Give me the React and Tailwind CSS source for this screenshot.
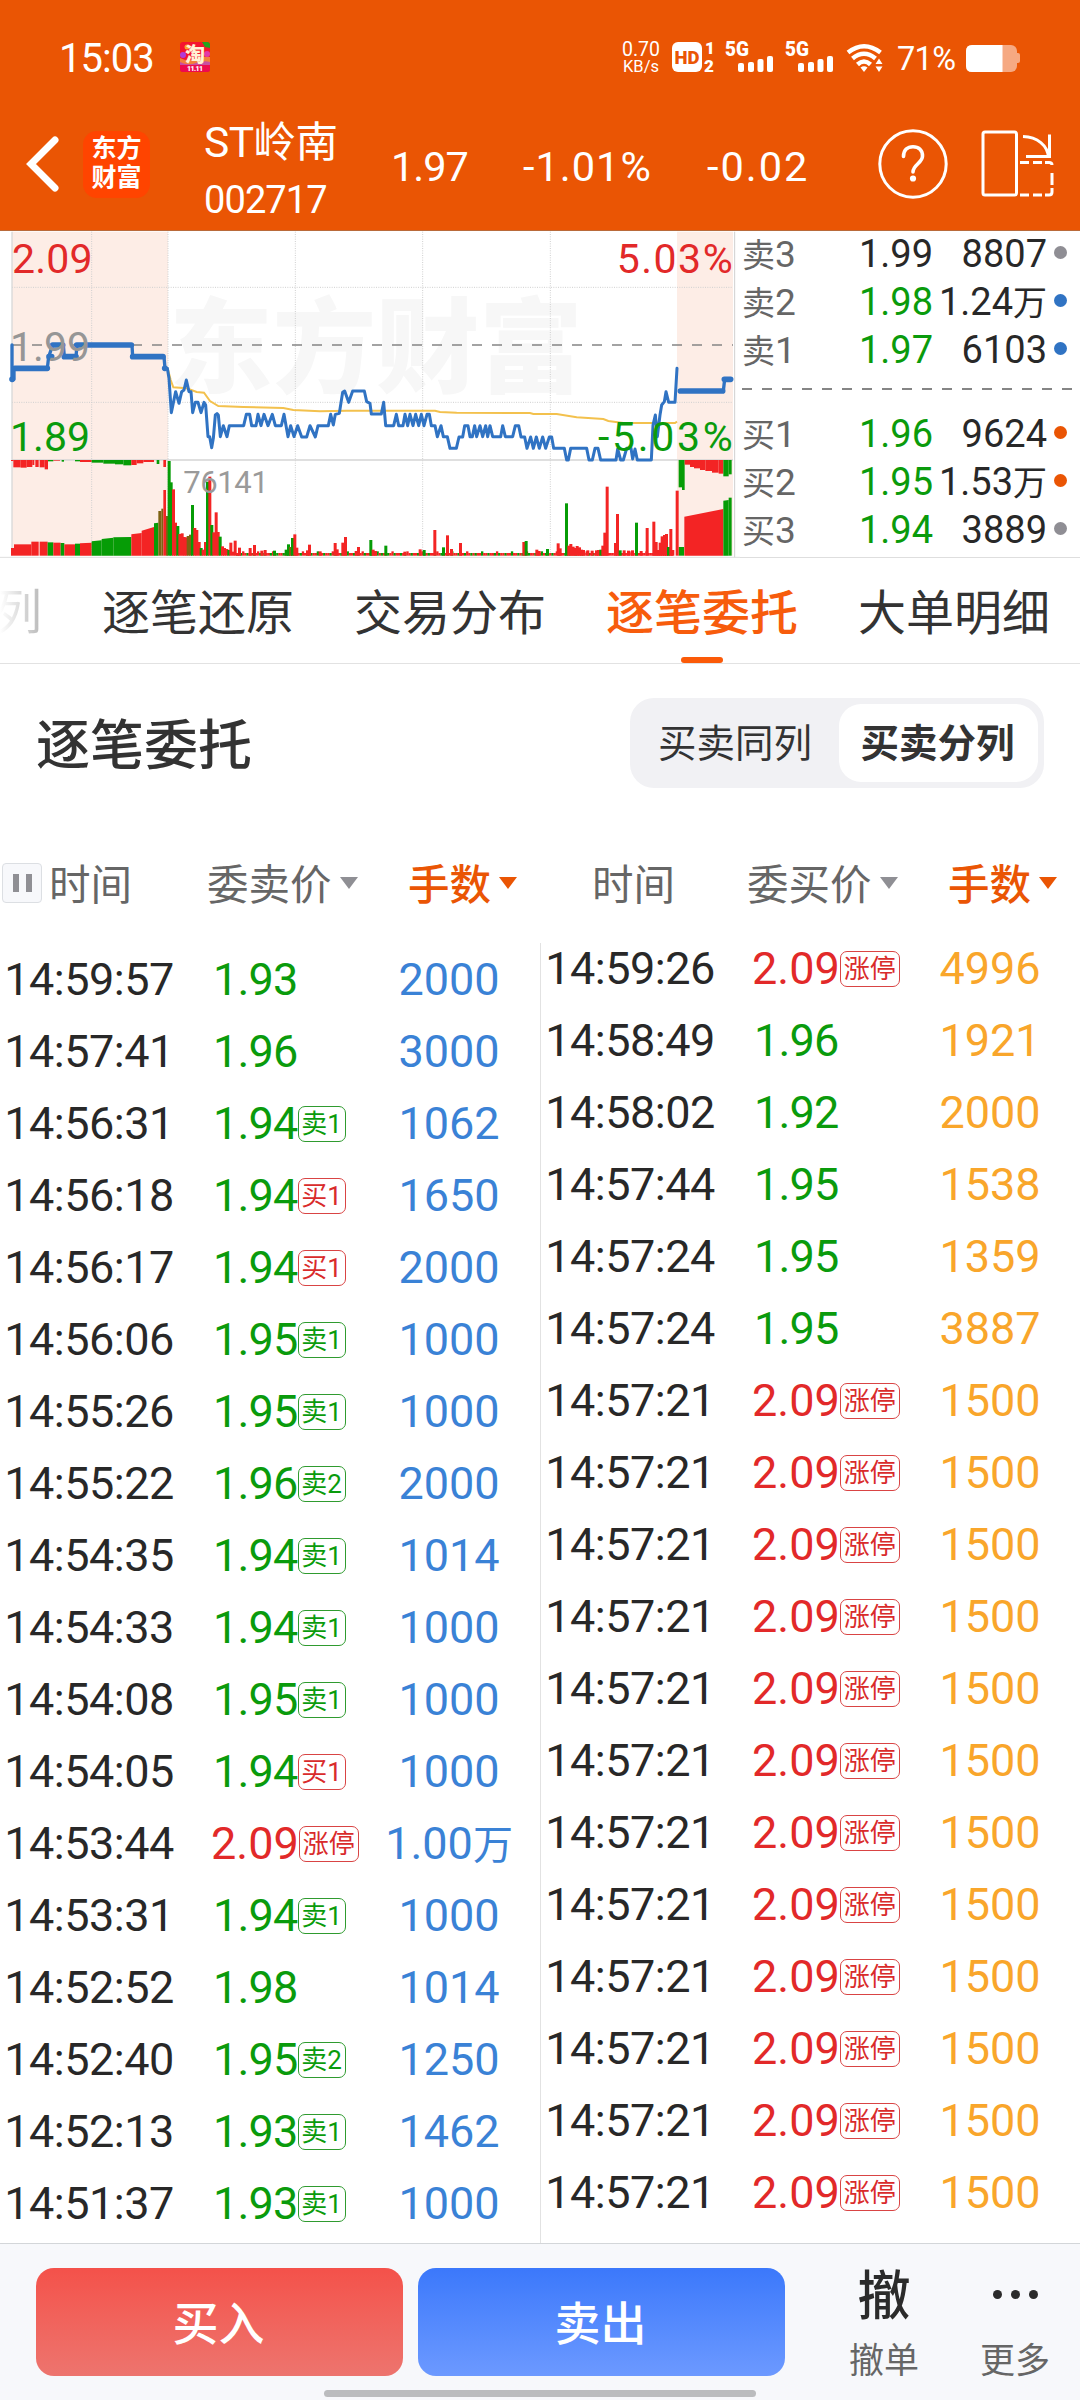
import { useState } from 'react';

const sellOrders = [
  { time: '14:59:57', price: '1.93', lots: '2000' },
  { time: '14:57:41', price: '1.96', lots: '3000' },
  { time: '14:56:31', price: '1.94', tag: '卖1', lots: '1062' },
  { time: '14:56:18', price: '1.94', tag: '买1', lots: '1650' },
  { time: '14:56:17', price: '1.94', tag: '买1', lots: '2000' },
  { time: '14:56:06', price: '1.95', tag: '卖1', lots: '1000' },
  { time: '14:55:26', price: '1.95', tag: '卖1', lots: '1000' },
  { time: '14:55:22', price: '1.96', tag: '卖2', lots: '2000' },
  { time: '14:54:35', price: '1.94', tag: '卖1', lots: '1014' },
  { time: '14:54:33', price: '1.94', tag: '卖1', lots: '1000' },
  { time: '14:54:08', price: '1.95', tag: '卖1', lots: '1000' },
  { time: '14:54:05', price: '1.94', tag: '买1', lots: '1000' },
  { time: '14:53:44', price: '2.09', tag: '涨停', lots: '1.00万' },
  { time: '14:53:31', price: '1.94', tag: '卖1', lots: '1000' },
  { time: '14:52:52', price: '1.98', lots: '1014' },
  { time: '14:52:40', price: '1.95', tag: '卖2', lots: '1250' },
  { time: '14:52:13', price: '1.93', tag: '卖1', lots: '1462' },
  { time: '14:51:37', price: '1.93', tag: '卖1', lots: '1000' },
];

const buyOrders = [
  { time: '14:59:26', price: '2.09', tag: '涨停', lots: '4996' },
  { time: '14:58:49', price: '1.96', lots: '1921' },
  { time: '14:58:02', price: '1.92', lots: '2000' },
  { time: '14:57:44', price: '1.95', lots: '1538' },
  { time: '14:57:24', price: '1.95', lots: '1359' },
  { time: '14:57:24', price: '1.95', lots: '3887' },
  ...Array.from({ length: 12 }, () => ({ time: '14:57:21', price: '2.09', tag: '涨停', lots: '1500' })),
];

const asks = [
  { label: '卖3', price: '1.99', vol: '8807', color: 'text-[#282828]', dot: 'bg-[#8f8e94]' },
  { label: '卖2', price: '1.98', vol: '1.24万', color: 'text-[#0a9b0c]', dot: 'bg-[#3073c3]' },
  { label: '卖1', price: '1.97', vol: '6103', color: 'text-[#0a9b0c]', dot: 'bg-[#3073c3]' },
];

const bids = [
  { label: '买1', price: '1.96', vol: '9624', color: 'text-[#0a9b0c]', dot: 'bg-[#ea5504]' },
  { label: '买2', price: '1.95', vol: '1.53万', color: 'text-[#0a9b0c]', dot: 'bg-[#ea5504]' },
  { label: '买3', price: '1.94', vol: '3889', color: 'text-[#0a9b0c]', dot: 'bg-[#8f8e94]' },
];

const tabs = ['逐笔还原', '交易分布', '逐笔委托', '大单明细'];

const priceLine =
  '495,430 502,430 507,460 514,563 527,500 537,535 545,500 552,495 559,465 567,500 573,500 578,563 586,532 594,532 603,563 612,532 617,540 624,635 629,635 635,668 640,640 646,570 651,566 655,570 661,635 670,602 681,635 688,602 731,602 739,568 749,568 755,602 768,602 774,568 783,602 792,568 804,602 817,568 826,602 844,602 852,568 864,635 872,602 882,635 893,602 905,636 920,636 930,602 946,636 954,602 985,602 992,568 1000,600 1006,568 1018,565 1028,502 1034,498 1046,532 1058,498 1093,498 1100,530 1110,535 1114,567 1144,567 1151,532 1157,602 1181,602 1189,568 1196,602 1209,602 1215,568 1223,602 1230,568 1239,602 1247,568 1256,602 1264,568 1272,602 1281,568 1288,568 1294,602 1305,602 1312,635 1323,602 1330,635 1342,635 1350,670 1369,670 1377,636 1388,636 1394,602 1404,602 1410,635 1417,635 1424,602 1430,635 1440,602 1448,635 1457,602 1463,635 1470,602 1478,635 1502,635 1508,602 1516,635 1538,635 1546,602 1556,602 1563,636 1574,636 1581,670 1592,636 1600,670 1609,636 1618,670 1628,636 1637,670 1648,636 1655,636 1661,670 1693,670 1700,705 1705,705 1712,670 1760,670 1767,705 1777,705 1785,670 1794,670 1802,705 1848,705 1853,672 1862,705 1870,705 1880,670 1893,670 1898,702 1905,672 1912,705 1954,705 1959,600 1966,570 1972,635 1980,570 1985,540 1993,530 1998,500 2006,532 2025,532 2031,430';

const avgLine =
  '503,430 512,465 520,487 560,490 590,501 612,503 630,528 655,543 730,546 850,549 880,555 960,559 1040,557 1305,557 1320,561 1370,563 1590,564 1600,567 1670,567 1730,577 1810,582 1825,588 1870,594 2025,594 2031,590';

const R = '#f32424';
const G = '#069c06';
const B = '#7d6212';

// call auction blocks: x1, x2, top at x1, top at x2, colour
const auction = [
  [33, 42, 969, 969, R], [42, 94, 958, 958, R], [94, 116, 950, 950, R], [119, 143, 950, 950, R],
  [143, 160, 952, 952, G], [160, 182, 953, 953, R], [182, 193, 954, 954, G], [193, 225, 958, 958, R],
  [225, 240, 956, 956, G], [240, 275, 955, 953, R], [275, 305, 949, 946, G], [305, 340, 942, 938, G],
  [340, 394, 937, 936, G], [394, 425, 928, 924, R], [425, 462, 917, 906, R], [462, 475, 895, 893, G],
  [475, 484, 858, 858, B], [484, 490, 851, 851, B], [490, 498, 795, 795, R], [498, 504, 873, 873, B],
  [2036, 2052, 966, 966, G], [2053, 2170, 875, 852, R], [2170, 2186, 827, 825, G], [2186, 2195, 818, 818, G],
];

// unmatched volume, hanging from the top of the volume pane
const hanging = [
  [33, 40, 708, R], [40, 62, 727, R], [62, 80, 728, R], [80, 97, 726, R], [97, 103, 720, R], [106, 116, 726, R],
  [119, 134, 727, R], [134, 144, 733, R], [144, 160, 709, G], [160, 180, 707, R], [185, 192, 710, G],
  [225, 240, 709, G], [240, 275, 711, R], [275, 310, 713, G], [310, 345, 716, G], [345, 370, 718, G],
  [370, 394, 721, G], [394, 410, 720, R], [410, 430, 715, R], [430, 462, 711, R], [470, 478, 717, G],
  [490, 498, 726, R], [2036, 2046, 787, G], [2046, 2054, 795, G], [2054, 2070, 719, R], [2070, 2082, 726, R],
  [2082, 2100, 730, R], [2100, 2116, 735, R], [2116, 2136, 738, R], [2136, 2156, 743, R], [2156, 2170, 746, R],
  [2170, 2186, 754, G], [2186, 2195, 748, G],
];

// minute volumes: x, top, colour
const minutes = [
  [507, 708, G], [513, 772, G], [520, 793, R], [526, 893, R], [533, 903, G], [539, 927, R], [546, 925, R],
  [552, 936, R], [558, 937, R], [564, 933, B], [571, 929, B], [577, 840, G], [584, 909, R], [590, 915, R],
  [597, 951, R], [603, 969, G], [609, 974, R], [616, 951, R], [622, 770, G], [629, 755, R], [635, 900, G],
  [641, 922, R], [648, 862, R], [654, 921, R], [660, 935, G], [667, 964, R], [673, 969, R], [680, 972, R],
  [686, 975, G], [692, 953, R], [699, 980, R], [705, 947, R], [712, 984, R], [718, 968, R], [750, 969, R],
  [763, 960, R], [785, 977, R], [795, 975, R], [823, 977, G], [858, 974, G], [865, 958, G], [871, 966, B],
  [877, 939, G], [884, 928, R], [890, 968, R], [922, 976, R], [928, 959, R], [960, 979, R], [1005, 954, R],
  [1011, 973, R], [1028, 953, R], [1036, 936, R], [1068, 978, R], [1075, 966, R], [1112, 945, G],
  [1119, 974, R], [1126, 978, R], [1157, 962, G], [1214, 980, R], [1260, 973, R], [1272, 975, G],
  [1304, 915, R], [1330, 967, G], [1342, 931, R], [1354, 972, R], [1381, 954, R], [1571, 951, R],
  [1578, 948, G], [1610, 974, R], [1617, 978, R], [1642, 972, G], [1674, 955, R], [1680, 970, R],
  [1699, 835, G], [1706, 962, R], [1712, 957, R], [1719, 965, R], [1725, 969, R], [1731, 963, R],
  [1738, 967, R], [1744, 974, R], [1750, 975, R], [1763, 976, R], [1776, 977, R], [1789, 976, R],
  [1795, 975, R], [1802, 974, G], [1808, 962, R], [1814, 923, R], [1821, 785, R], [1846, 954, R],
  [1852, 867, R], [1860, 976, G], [1872, 976, R], [1885, 977, R], [1897, 976, R], [1909, 893, G],
  [1923, 978, R], [1941, 909, R], [1961, 890, R], [1968, 951, R], [1974, 975, R], [1980, 953, R],
  [1986, 934, R], [1993, 930, R], [1999, 927, R], [2005, 966, G], [2012, 912, R], [2018, 975, R], [2031, 797, R],
];

function StockChart() {
  const floor = [];
  for (let i = 0; i < 205; i++) {
    const x = 710 + i * 6.4;
    floor.push([x, 984 - (i % 7 === 3 ? 5 : 0), (i * 7) % 11 < 4 && i < 170 ? G : R]);
  }
  return (
    <svg className="block shrink-0" width="740" height="327" viewBox="0 18 2220 981">
      <rect x="36" y="20" width="468" height="972" fill="#fdede6" />
      <rect x="2031" y="20" width="168" height="972" fill="#fdede6" />
      <text x="508" y="480" fontSize="310" fontWeight="900" fill="#f7f7f7" fontFamily="Noto Sans CJK SC">
        东方财富
      </text>
      <g stroke="#cfcfcf" strokeWidth="3" strokeDasharray="3 4">
        <path d="M275 20V992M504 20V992M886 20V992M1268 20V992M1651 20V992" />
        <path d="M36 187H2199M36 532H2199" />
      </g>
      <path d="M36 20V992" stroke="#d8d8d8" strokeWidth="4" />
      <path d="M2204 20V998" stroke="#d0d0d0" strokeWidth="3" />
      <path d="M36 360H2199" stroke="#858585" strokeWidth="5" strokeDasharray="30 30" />
      <path d="M36 705H2199" stroke="#d4d4d4" strokeWidth="5" />

      {auction.map(([x1, x2, t1, t2, c]) => (
        <polygon key={x1} points={`${x1},992 ${x1},${t1} ${x2},${t2} ${x2},992`} fill={c} />
      ))}
      {hanging.map(([x1, x2, y, c]) => (
        <rect key={x1} x={x1} y="705" width={x2 - x1} height={y - 705} fill={c} />
      ))}
      {floor.map(([x, y, c]) => (
        <rect key={x} x={x - 3} y={y} width="7" height={992 - y} fill={c} />
      ))}
      {minutes.map(([x, y, c]) => (
        <rect key={x} x={x - 4} y={y} width="9" height={992 - y} fill={c} />
      ))}
      <path d="M0 997H2220" stroke="#dedede" strokeWidth="3" />

      <polyline points={avgLine} fill="none" stroke="#f3c14d" strokeWidth="6" />
      <g fill="none" stroke="#3073c3" strokeLinecap="round" strokeLinejoin="round">
        <polyline points={priceLine} strokeWidth="9" />
        <path
          d="M36 360V463M42 463V430M142 430L146 395L158 360M190 360L193 395M228 395L231 360M396 360L398 395M492 395L495 430M2170 498L2174 463"
          strokeWidth="10"
        />
        <path
          d="M36 463h1M44 430H142M147 395h8M158 360H188M193 395H228M230 360H394M398 395H489M494 430h1M2041 498H2168M2173 463H2192"
          strokeWidth="17"
        />
      </g>

      <g fontFamily="Roboto" fontSize="123">
        <text x="36" y="143" fill="#e22929" textLength="242">2.09</text>
        <text x="30" y="409" fill="#969696" textLength="240">1.99</text>
        <text x="30" y="677" fill="#0a9b0c" textLength="240">1.89</text>
        <text x="1850" y="143" fill="#e22929" textLength="348">5.03%</text>
        <text x="1794" y="677" fill="#0a9b0c" textLength="404">-5.03%</text>
        <text x="550" y="803" fill="#9a9a9a" fontSize="93" textLength="256">76141</text>
      </g>
    </svg>
  );
}

function BookRow({ row }) {
  return (
    <div className="flex h-12 items-center text-[38px]">
      <div className="w-[69px] text-[#666]">
        <span className="text-[33px]">{row.label[0]}</span>
        <span className="text-[37px]">{row.label[1]}</span>
      </div>
      <div className={`w-[122px] text-right ${row.color}`}>{row.price}</div>
      <div className="w-[114px] text-right text-[#282828] whitespace-nowrap">
        {row.vol.replace('万', '')}
        {row.vol.includes('万') && <span className="text-[34px]">万</span>}
      </div>
      <div className={`mb-1 ml-[7px] h-[13px] w-[13px] rounded-full ${row.dot}`} />
    </div>
  );
}

function StatusBar() {
  return (
    <div className="flex h-[114px] items-center pl-[59px]">
      <div className="w-[121px] pt-1 text-[40px] leading-none tracking-[-1px]">15:03</div>
      <svg width="30" height="30" viewBox="0 0 30 30">
        <rect width="30" height="30" rx="3" fill="#f5142f" />
        <path d="M0 16Q8 20 15 17T30 15V24H0Z" fill="#f2803c" />
        <path d="M0 20Q8 24 16 21T30 20V24H0Z" fill="#c94fa0" />
        <circle cx="3" cy="13" r="3" fill="#b23bd8" />
        <circle cx="27" cy="12" r="3" fill="#e13aa8" />
        <path d="M22 0H27Q30 0 30 3V6L25 5Z" fill="#23a51c" />
        <circle cx="7" cy="5" r="2.500" fill="#f7a52a" />
        <text x="5" y="19.500" fontSize="20" fontWeight="900" fill="#fff3d6" fontFamily="Noto Sans CJK SC">淘</text>
        <path d="M0 23H30V27Q30 30 27 30H3Q0 30 0 27Z" fill="#ee0a4e" />
        <text x="7" y="29" fontSize="7" fontWeight="900" fill="#fff" fontFamily="Roboto" textLength="16">11.11</text>
      </svg>
      <svg className="ml-[405px]" width="410" height="50" viewBox="615 32 410 50" fill="#fff">
        <g fontFamily="Roboto" fontWeight="400">
          <text x="622" y="56" fontSize="19.500" textLength="38">0.70</text>
          <text x="623" y="71.500" fontSize="16.500" textLength="36">KB/s</text>
        </g>
        <rect x="672" y="42" width="30" height="30" rx="6" />
        <g fontFamily="Roboto" fontWeight="900">
          <text x="674.500" y="64" fontSize="19" textLength="25" lengthAdjust="spacingAndGlyphs" fill="#ea5504">HD</text>
          <text x="705" y="54" fontSize="17">1</text>
          <text x="704" y="72" fontSize="17">2</text>
          <text x="725" y="56" fontSize="19.500" textLength="24" lengthAdjust="spacingAndGlyphs">5G</text>
          <text x="785" y="56" fontSize="19.500" textLength="24" lengthAdjust="spacingAndGlyphs">5G</text>
        </g>
        {[738, 798].map((x) => (
          <g key={x}>
            <rect x={x} y="63" width="6" height="9" rx="2" />
            <rect x={x + 10} y="62" width="6" height="10" rx="2" />
            <rect x={x + 19.5} y="59" width="6" height="13" rx="2" />
            <rect x={x + 29} y="56" width="6" height="16" rx="2" />
          </g>
        ))}
        <g fill="none" stroke="#fff" strokeWidth="4.500">
          <path d="M848 52.500Q864 40 880.500 52.500" />
          <path d="M852.500 58.500Q864 49 875.500 58.500" />
          <path d="M857.500 64.500Q864 58.500 870.500 64.500" />
        </g>
        <path d="M860.500 67.500Q864 65 867.500 67.500L864 72Z" />
        <path d="M875.500 64L879 58.500L882.500 64ZM875.500 66.500H882.500L879 72Z" />
        <text x="897" y="70" fontSize="32.500" fontFamily="Roboto" textLength="59">71%</text>
        <rect x="966" y="45" width="51" height="27" rx="6" fill="#f6a982" />
        <rect x="1015" y="53" width="5" height="10" rx="2" fill="#f6a982" />
        <path d="M972 45H1002.500V72H972Q966 72 966 66V51Q966 45 972 45Z" />
      </svg>
    </div>
  );
}

function TitleBar() {
  return (
    <div className="flex h-[100px] items-center">
      <svg className="ml-[24px] shrink-0" width="38" height="60" viewBox="0 0 38 60" fill="none" stroke="#fff" strokeWidth="7">
        <path d="M31 6L7 30L31 54" strokeLinecap="round" strokeLinejoin="miter" />
      </svg>
      <div className="ml-[21px] flex h-[67px] w-[67px] shrink-0 flex-col items-center justify-center rounded-[14px] bg-[#ff4400] pb-[2px] text-[25px] leading-[29px] font-bold">
        <span>东方</span>
        <span>财富</span>
      </div>
      <div className="ml-[54px] flex w-[187px] flex-col pt-[12px]">
        <span className="h-[60px] text-[42.5px] leading-[60px] tracking-[-0.5px] whitespace-nowrap">ST岭南</span>
        <span className="h-[54px] text-[38px] leading-[54px] tracking-[-0.9px]">002717</span>
      </div>
      <div className="flex pt-[6px] text-[41.5px] leading-none">
        <span className="w-[132px] tracking-[-1px]">1.97</span>
        <span className="w-[184px] tracking-[1px]">-1.01%</span>
        <span className="w-[171px] tracking-[2px]">-0.02</span>
      </div>
      <svg className="shrink-0" width="72" height="72" viewBox="0 0 72 72" fill="none" stroke="#fff" strokeWidth="3" strokeLinecap="round">
        <circle cx="35" cy="36" r="33.200" />
        <path d="M25.500 28.500C25.500 22 29.500 18.700 35 18.700S44.500 22 44.500 28C44.500 35 35 36.500 35 44" strokeWidth="3.600" />
        <circle cx="35" cy="50.500" r="1.600" fill="#fff" />
      </svg>
      <svg className="ml-[29px] shrink-0" width="76" height="70" viewBox="0 0 76 70" fill="none" stroke="#fff" strokeWidth="3">
        <rect x="4" y="3" width="33.500" height="63" rx="2" />
        <path d="M44 7.500C58 8 69 16 69.500 29M70.500 5.500V27.500H47" />
        <path d="M41 33.500H50M54 33.500H63M66 33.500H70Q73 33.500 73 36M73 44V56M73 59V63Q73 66 70 66H66M63 66H54M50 66H41" />
      </svg>
    </div>
  );
}

function Caret({ active }) {
  return (
    <svg className="mb-[7px] ml-[8px] shrink-0" width="18" height="12" viewBox="0 0 18 12">
      <path d="M0 0H18L9 12Z" fill={active ? '#ea5504' : '#8f8f94'} />
    </svg>
  );
}

function OrderRow({ order, side }) {
  const up = order.price === '2.09';
  const tagRed = up || (order.tag && order.tag[0] === '买');
  return (
    <div className="flex h-[72px] items-center text-[45px]">
      <div className="w-[178px] text-center tracking-[-0.5px] text-[#282828]">{order.time}</div>
      <div className={`flex w-[181px] items-center ${up ? 'pl-[33px] text-[#e22929]' : 'pl-[35px] text-[#0a9b0c]'}`}>
        <span className={up ? '' : 'tracking-[-0.8px]'}>{order.price}</span>
        {order.tag && (
          <span
            className={`flex h-9 items-center justify-center rounded-[7px] border pb-px text-[26px] leading-none whitespace-nowrap ${
              up ? 'w-[61px]' : 'w-12'
            } ${tagRed ? 'border-[#d94444] text-[#d92b2b]' : 'border-[#2f9b2f] text-[#0a9b0c]'}`}
          >
            {order.tag}
          </span>
        )}
      </div>
      <div className={`w-[180px] text-center whitespace-nowrap ${side === 'sell' ? 'text-[#3a82d6]' : 'text-[#f9a62b]'}`}>
        {order.lots.replace('万', '')}
        {order.lots.includes('万') && <span className="text-[40px]">万</span>}
      </div>
    </div>
  );
}

function ColumnHead({ label, pausable }) {
  return (
    <div className="flex w-[540px] items-center text-[41.5px] text-[#666]">
      <div className={`flex w-[207px] items-center ${pausable ? 'pl-[2px]' : 'pl-[52px]'}`}>
        {pausable && (
          <div className="mr-[7px] mb-[7px] flex h-10 w-10 items-center justify-center gap-[7px] rounded-[4px] border border-[#dcdfe3] bg-[#f7f8fb]">
            <div className="h-[18px] w-[6px] bg-[#8f8f94]" />
            <div className="h-[18px] w-[6px] bg-[#8f8f94]" />
          </div>
        )}
        时间
      </div>
      <div className="flex w-[201px] items-center">
        {label}
        <Caret />
      </div>
      <div className="flex items-center font-medium text-[#ea5504]">
        手数
        <Caret active />
      </div>
    </div>
  );
}

export default function App() {
  const [tab, setTab] = useState('逐笔委托');
  const [split, setSplit] = useState(true);

  return (
    <div className="flex h-[2400px] w-[1080px] flex-col overflow-hidden bg-white font-['Roboto','Noto_Sans_CJK_SC',sans-serif]">
      <header className="h-[231px] border-b border-[#b96a3a] bg-[#ea5504] text-white">
        <StatusBar />
        <TitleBar />
      </header>

      <section className="flex h-[327px]">
        <StockChart />
        <div className="flex flex-1 flex-col border-b border-[#dedede] pl-[2px]">
          <div className="-mt-[1px]">
            {asks.map((row) => (
              <BookRow key={row.label} row={row} />
            ))}
          </div>
          <svg className="mt-[14px] mb-[20px] block shrink-0" width="331" height="2" viewBox="0 0 331 2">
            <path d="M0 1H331" stroke="#858585" strokeWidth="2" strokeDasharray="10 10" />
          </svg>
          {bids.map((row) => (
            <BookRow key={row.label} row={row} />
          ))}
        </div>
      </section>

      <nav className="flex h-[106px] gap-[60px] border-b border-[#e2e2e2] text-[48px] text-[#333]">
        <div className="flex w-[42px] items-center justify-end overflow-hidden bg-gradient-to-r from-white to-[#b8b8b8] bg-clip-text pt-1 text-transparent">
          列
        </div>
        {tabs.map((name) => (
          <button
            key={name}
            type="button"
            onClick={() => setTab(name)}
            className={`flex w-[192px] shrink-0 flex-col items-center whitespace-nowrap ${tab === name ? 'font-medium text-[#f75c0c]' : ''}`}
          >
            <span className="h-[99px] leading-[112px]">{name}</span>
            {tab === name && <span className="h-[6px] w-[42px] rounded-full bg-[#fb5a08]" />}
          </button>
        ))}
      </nav>

      <div className="flex h-[157px] items-center justify-between pr-9 pl-[36px]">
        <h2 className="pt-[8px] text-[54px] font-medium text-[#333]">逐笔委托</h2>
        <div className="flex h-[90px] w-[414px] items-center rounded-[24px] bg-[#f1f1f4] p-[6px] text-[38.5px] text-[#333]">
          <button type="button" onClick={() => setSplit(false)} className={`h-[78px] w-[203px] rounded-[22px] pt-[3px] pr-[5px] ${split ? '' : 'bg-white font-bold'}`}>
            买卖同列
          </button>
          <button type="button" onClick={() => setSplit(true)} className={`h-[78px] w-[199px] rounded-[22px] pt-[3px] pr-[2px] ${split ? 'bg-white font-bold' : ''}`}>
            买卖分列
          </button>
        </div>
      </div>

      <div className="flex h-[122px] items-center pt-[8px]">
        <ColumnHead label="委卖价" pausable />
        <ColumnHead label="委买价" />
      </div>

      <main className="flex h-[1300px] overflow-hidden">
        <div className="w-[541px] border-r border-[#e2e2e2] pt-px">
          {sellOrders.map((order, i) => (
            <OrderRow key={i} order={order} side="sell" />
          ))}
        </div>
        <div className="-mt-[10px] w-[539px]">
          {buyOrders.map((order, i) => (
            <OrderRow key={i} order={order} side="buy" />
          ))}
        </div>
      </main>

      <footer className="flex flex-1 flex-col items-center border-t border-[#d3d6d9] bg-[#f7f8fb]">
        <div className="mt-6 flex h-[108px] w-full items-center pl-9">
          <button type="button" className="h-[108px] w-[367px] rounded-[18px] bg-gradient-to-b from-[#f4514a] to-[#ed746e] pt-[4px] pr-[2px] text-[46px] font-medium text-white">
            买入
          </button>
          <button type="button" className="ml-[15px] h-[108px] w-[367px] rounded-[18px] bg-gradient-to-b from-[#3b78fb] to-[#6c99ff] pt-[4px] pr-[2px] text-[46px] font-medium text-white">
            卖出
          </button>
          <div className="ml-[49px] flex w-[100px] flex-col items-center pt-[16px] text-[#666]">
            <span className="h-[64px] text-[53px] leading-[64px] font-medium text-[#2b2b2b]">撤</span>
            <span className="text-[35px] leading-[66px]">撤单</span>
          </div>
          <div className="ml-[31px] flex w-[100px] flex-col items-center pt-[16px] text-[#666]">
            <div className="flex h-[64px] items-center gap-[9px] pb-[6px]">
              <div className="h-[9px] w-[9px] rounded-full bg-[#2b2b2b]" />
              <div className="h-[9px] w-[9px] rounded-full bg-[#2b2b2b]" />
              <div className="h-[9px] w-[9px] rounded-full bg-[#2b2b2b]" />
            </div>
            <span className="text-[35px] leading-[66px]">更多</span>
          </div>
        </div>
        <div className="mt-[14px] h-[7px] w-[432px] rounded-full bg-[#bbbcbe]" />
      </footer>
    </div>
  );
}
